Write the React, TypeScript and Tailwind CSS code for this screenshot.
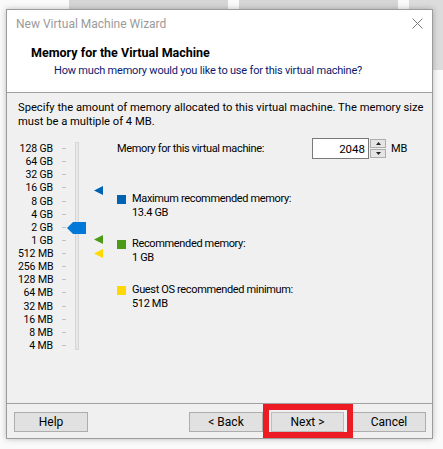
import React from "react";

const labels = ["128 GB","64 GB","32 GB","16 GB","8 GB","4 GB","2 GB","1 GB","512 MB","256 MB","128 MB","64 MB","32 MB","16 MB","8 MB","4 MB"];

function Tri({ color, className }: { color: string; className: string }) {
  return (
    <svg className={className} width="9" height="9" viewBox="0 0 9 9">
      <polygon points="0,4.5 9,0 9,9" fill={color} />
    </svg>
  );
}

function Btn({ children, light }: { children: React.ReactNode; light?: boolean }) {
  return (
    <div className={`h-[20px] flex items-center justify-center bg-[#e1e1e1] border ${light ? "border-[#bcbcbc]" : "border-[#adadad]"} text-[12px] text-black`}>
      {children}
    </div>
  );
}

export default function App() {
  return (
    <div className="relative w-[443px] h-[449px] bg-[#fafafa] overflow-hidden font-['Roboto',sans-serif] text-[11px] tracking-[-0.25px] leading-[14px]">
      {/* background windows */}
      <div className="absolute left-[69px] top-0 w-[159px] h-[10px] bg-[#d6d6d6]" />
      <div className="absolute left-[239px] top-0 w-[159px] h-[10px] bg-[#d6d6d6]" />
      <div className="absolute left-[409px] top-0 w-[34px] h-[70px] bg-[#dcdcdc]" />

      {/* dialog */}
      <div className="absolute left-[6px] top-[9px] w-[427px] h-[430px] border border-[#9c9c9c] bg-[#f0f0f0] flex flex-col shadow-[0_0_6px_rgba(0,0,0,0.25)]">
        {/* title bar */}
        <div className="h-[27px] bg-white flex items-center justify-between pl-[9px] pr-[9px]">
          <span className="text-[#9a9a9a] text-[12px] tracking-normal">New Virtual Machine Wizard</span>
          <svg width="11" height="11" viewBox="0 0 11 11">
            <path d="M0.5 0.5 L10.5 10.5 M10.5 0.5 L0.5 10.5" stroke="#7a7a7a" strokeWidth="1" />
          </svg>
        </div>
        {/* header */}
        <div className="h-[55px] bg-white pl-[24px] pt-[7px]">
          <div className="font-bold leading-[18px] text-black text-[12.5px] tracking-normal">Memory for the Virtual Machine</div>
          <div className="leading-[18px] pl-[23px] text-[#0b1a6e] tracking-[-0.2px]">How much memory would you like to use for this virtual machine?</div>
        </div>
        <div className="h-px bg-[#a0a0a0]" />
        {/* body */}
        <div className="h-[310px] pl-[11px] pt-[8px] text-black">
          <p className="whitespace-nowrap text-[11.2px] tracking-normal">
            Specify the amount of memory allocated to this virtual machine. The memory size
            <br />
            must be a multiple of 4 MB.
          </p>
          <div className="mt-[9px] flex items-start">
            {/* slider */}
            <div className="relative w-[99px] h-[212px] mt-[4px]">
              <div className="flex flex-col">
                {labels.map((l) => (
                  <div key={l} className="h-[13.13px] flex items-center">
                    <span className="w-[35px] text-right whitespace-nowrap text-[10.5px] leading-[13px] tracking-[-0.1px]">{l}</span>
                    <span className="ml-[9px] w-[4px] h-px bg-[#c4c4c4]" />
                  </div>
                ))}
              </div>
              <div className="absolute left-[57px] top-0 w-[4px] h-[208px] border border-[#d6d6d6] bg-[#e7e7e7]" />
              <svg className="absolute left-[49px] top-[80px]" width="19" height="12" viewBox="0 0 19 12">
                <polygon points="0,6 6,0 19,0 19,12 6,12" fill="#0078d7" />
              </svg>
              <Tri color="#0063b1" className="absolute left-[76px] top-[44px]" />
              <Tri color="#4d9a18" className="absolute left-[76px] top-[93px]" />
              <Tri color="#ffd800" className="absolute left-[76px] top-[107px]" />
            </div>
            {/* right column */}
            <div className="flex flex-col tracking-[-0.35px]">
              <div className="h-[21px] flex items-center">
                <span className="w-[195px]">Memory for this virtual machine:</span>
                <div className="h-[21px] w-[57px] border border-[#7a7a7a] bg-white flex items-center justify-end pr-[3px] text-[11.5px] tracking-normal">2048</div>
                <div className="h-[21px] w-[18px] flex flex-col justify-between py-[1px] pl-[1px]">
                  <div className="h-[9px] w-[16px] border border-[#adadad] bg-[#e5e5e5] flex items-center justify-center">
                    <svg width="5" height="3" viewBox="0 0 5 3"><polygon points="0,3 2.5,0 5,3" fill="#222" /></svg>
                  </div>
                  <div className="h-[9px] w-[16px] border border-[#adadad] bg-[#e5e5e5] flex items-center justify-center">
                    <svg width="5" height="3" viewBox="0 0 5 3"><polygon points="0,0 5,0 2.5,3" fill="#222" /></svg>
                  </div>
                </div>
                <span className="ml-[4px] tracking-normal">MB</span>
              </div>
              <div className="mt-[33px] flex items-start">
                <span className="mt-[3px] w-[9px] h-[9px] bg-[#0063b1]" />
                <div className="ml-[6px]">Maximum recommended memory:<br />13.4 GB</div>
              </div>
              <div className="mt-[17px] flex items-start">
                <span className="mt-[3px] w-[9px] h-[9px] bg-[#4d9a18]" />
                <div className="ml-[6px]">Recommended memory:<br />1 GB</div>
              </div>
              <div className="mt-[18px] flex items-start">
                <span className="mt-[3px] w-[9px] h-[9px] bg-[#ffd800]" />
                <div className="ml-[6px]">Guest OS recommended minimum:<br />512 MB</div>
              </div>
            </div>
          </div>
        </div>
        <div className="h-px bg-[#a0a0a0]" />
        {/* footer */}
        <div className="h-[34px] flex items-start pt-[8px] pl-[7px] pr-[6px] tracking-normal">
          <div className="w-[74px]"><Btn>Help</Btn></div>
          <div className="flex-1" />
          <div className="w-[74px]"><Btn>&lt; Back</Btn></div>
          <div className="w-[73px] ml-[8px]"><Btn light>Next &gt;</Btn></div>
          <div className="w-[74px] ml-[8px]"><Btn>Cancel</Btn></div>
        </div>
      </div>

      {/* red highlight */}
      <div className="absolute left-[263px] top-[404px] w-[90px] h-[34px] border-[6px] border-[#ed1c24]" />
    </div>
  );
}
